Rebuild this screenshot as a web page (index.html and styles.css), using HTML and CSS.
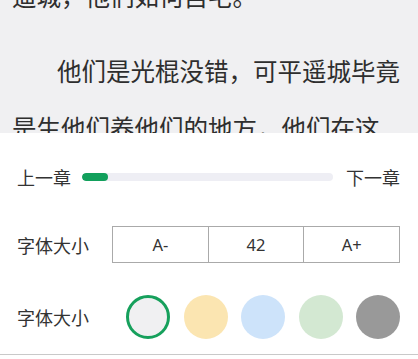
FILE: index.html
```html
<!DOCTYPE html>
<html lang="zh-CN">
<head>
    <meta charset="UTF-8">
    <meta name="viewport" content="width=device-width, initial-scale=1.0">
    <title>阅读设置</title>
    <link rel="stylesheet" href="styles.css">
</head>
<body>
    <div class="reader">
        <p class="first">遥城，他们如何自宅。</p>
        <p>他们是光棍没错，可平遥城毕竟是生他们养他们的地方，他们在这里长大。</p>
    </div>

    <div class="panel">
        <div class="row chapter-row">
            <span class="label">上一章</span>
            <div class="progress">
                <div class="progress-fill" style="width: 26px;"></div>
            </div>
            <span class="label">下一章</span>
        </div>

        <div class="row size-row">
            <span class="label">字体大小</span>
            <div class="stepper">
                <button class="cell">A-</button>
                <span class="cell">42</span>
                <button class="cell">A+</button>
            </div>
        </div>

        <div class="row theme-row">
            <span class="label">字体大小</span>
            <div class="swatches">
                <span class="swatch swatch-default active"></span>
                <span class="swatch swatch-yellow"></span>
                <span class="swatch swatch-blue"></span>
                <span class="swatch swatch-green"></span>
                <span class="swatch swatch-gray"></span>
            </div>
        </div>
    </div>
</body>
</html>
```

FILE: styles.css
```css
html, body {
    margin: 0;
    padding: 0;
    background-color: #fff;
}
body {
    font-family: "Noto Sans CJK SC", "Noto Sans", sans-serif;
    color: #333;
    width: 418px;
    height: 359px;
    overflow: hidden;
}
.reader {
    height: 133px;
    overflow: hidden;
    background-color: #f0f0f2;
    padding: 0 17px 0 12px;
    font-size: 24.5px;
    line-height: 57px;
    color: #2e2e2e;
}
.reader p {
    margin: 0 0 18px;
    text-indent: 45px;
}
.reader p.first {
    margin-top: -33px;
    text-indent: 0;
}
.panel {
    background-color: #fff;
    padding: 0 18px 15px 17px;
    border-bottom: 1px solid #c9c9c9;
}
.row {
    display: flex;
    align-items: center;
}
.label {
    font-size: 18px;
    line-height: 24px;
    color: #333;
    white-space: nowrap;
}
.chapter-row {
    padding-top: 32px;
    height: 24px;
}
.progress {
    flex: 1;
    height: 8px;
    margin: 0 13px 0 11px;
    border-radius: 4px;
    background-color: #eeeef4;
    overflow: hidden;
}
.progress-fill {
    height: 100%;
    border-radius: 4px;
    background-color: #12a05c;
}
.size-row {
    margin-top: 37px;
    height: 37px;
}
.stepper {
    display: flex;
    margin-left: auto;
    width: 288px;
    height: 37px;
    border: 1px solid #aaa;
    box-sizing: border-box;
}
.cell {
    flex: 1;
    display: flex;
    align-items: center;
    justify-content: center;
    font-family: "Noto Sans", sans-serif;
    font-size: 16.5px;
    color: #333;
    background: #fff;
    border: none;
    padding: 0;
    border-right: 1px solid #aaa;
}
.cell:last-child {
    border-right: none;
}
.theme-row {
    margin-top: 32px;
    height: 44px;
}
.swatches {
    display: flex;
    gap: 13.5px;
    margin-left: auto;
}
.swatch {
    width: 44px;
    height: 44px;
    border-radius: 50%;
    box-sizing: border-box;
}
.swatch-default {
    background-color: #f0f0f2;
}
.swatch.active {
    border: 3px solid #16a05c;
}
.swatch-yellow {
    background-color: #fbe5b1;
}
.swatch-blue {
    background-color: #cde3fa;
}
.swatch-green {
    background-color: #d3e8d2;
}
.swatch-gray {
    background-color: #999;
}
```
